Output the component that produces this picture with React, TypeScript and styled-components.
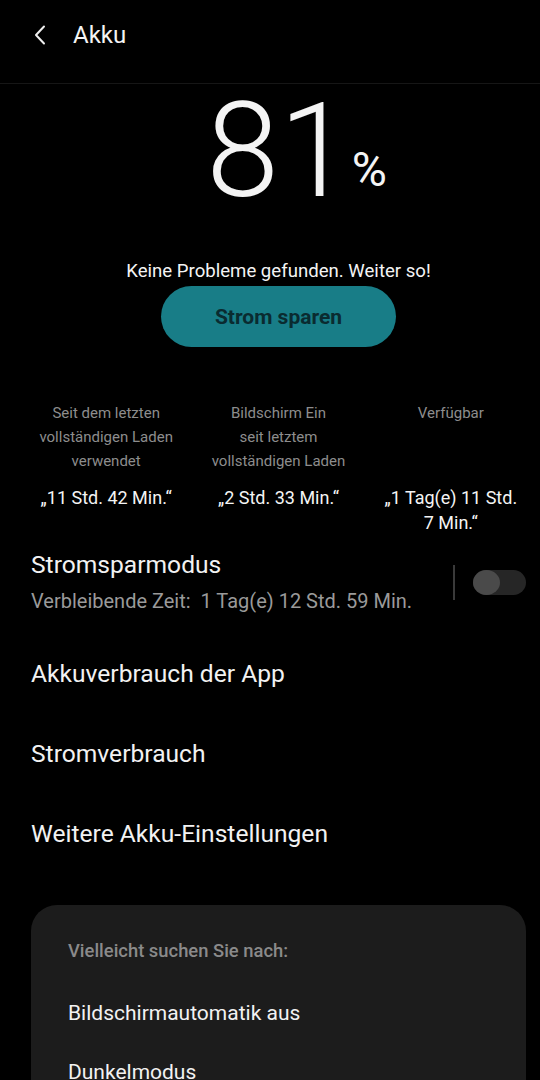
import React from "react"
import styled, { createGlobalStyle } from "styled-components"

const GlobalStyle = createGlobalStyle`
  html, body {
    margin: 0;
    padding: 0;
    background: #000;
  }
  body {
    font-family: Roboto, "Noto Sans", "Liberation Sans", sans-serif;
    color: #f4f4f4;
  }
`

const Page = styled.div`
  width: 540px;
  height: 1080px;
  overflow: hidden;
  background: #000;
`

const Header = styled.header`
  display: flex;
  align-items: center;
  height: 70px;
  padding: 0 0 13px 0;
  border-bottom: 1px solid #161616;
`

const BackButton = styled.button`
  display: flex;
  align-items: center;
  justify-content: center;
  width: 40px;
  height: 40px;
  margin-left: 20px;
  padding: 0;
  background: none;
  border: none;
  color: #eee;
`

const Title = styled.h1`
  margin: 0 0 0 13px;
  font-size: 24px;
  font-weight: 400;
  color: #f4f4f4;
`

const Level = styled.div`
  display: flex;
  justify-content: center;
  margin-top: 2px;
  padding-left: 18px;
`

const LevelNumber = styled.span`
  position: relative;
  font-size: 131px;
  line-height: 131px;
  font-weight: 300;
`

const Percent = styled.span`
  position: absolute;
  left: 100%;
  bottom: 23px;
  margin-left: 0;
  font-size: 48px;
  line-height: 48px;
  font-weight: 400;
`

const Content = styled.main`
  padding: 0 14px 0 31px;
`

const Message = styled.p`
  margin: 42px 0 0;
  text-align: center;
  font-size: 18.6px;
  line-height: 24px;
`

const SaveButton = styled.button`
  display: block;
  width: 235px;
  height: 61px;
  margin: 3px auto 0;
  border: none;
  border-radius: 31px;
  background: #187d87;
  color: #0a2b30;
  font-family: Roboto, sans-serif;
  font-size: 21px;
  font-weight: 700;
`

const Stats = styled.div`
  display: grid;
  grid-template-columns: repeat(3, 1fr);
  margin: 54px -11px 0;
`

const Stat = styled.div`
  display: flex;
  flex-direction: column;
  align-items: center;
  text-align: center;
  padding: 0 6px;
`

const StatLabel = styled.div`
  height: 72px;
  font-size: 15px;
  line-height: 24px;
  color: #8d8d8d;
`

const StatValue = styled.div`
  margin-top: 12px;
  font-size: 18px;
  line-height: 25px;
  color: #f4f4f4;
`

const SwitchRow = styled.div`
  display: flex;
  align-items: center;
  margin-top: 15px;
`

const SwitchText = styled.div`
  flex: 1;
`

const ItemTitle = styled.div`
  font-size: 24.6px;
  line-height: 30px;
  color: #f2f2f2;
`

const ItemSub = styled.div`
  margin-top: 8px;
  font-size: 20px;
  line-height: 26px;
  color: #9a9a9a;
  white-space: pre;
`

const VDivider = styled.div`
  width: 2px;
  height: 35px;
  margin-right: 18px;
  background: #3a3a3a;
`

const Toggle = styled.div`
  display: flex;
  align-items: center;
  width: 53px;
  height: 25px;
  border-radius: 13px;
  background: #262626;
`

const Knob = styled.div`
  width: 27px;
  height: 25px;
  border-radius: 50%;
  background: #4a4a4a;
`

const List = styled.div`
  margin-top: 19px;
`

const ListItem = styled.div`
  display: flex;
  align-items: center;
  height: 80px;
  font-size: 24.6px;
  color: #f2f2f2;
`

const Card = styled.section`
  margin-top: 32px;
  padding: 34px 37px 0;
  border-radius: 26px;
  background: #1c1c1c;
  height: 200px;
`

const CardHeader = styled.div`
  font-size: 18.4px;
  line-height: 24px;
  font-weight: 500;
  color: #8a8a8a;
`

const CardItems = styled.div`
  margin-top: 20px;
`

const CardItem = styled.div`
  display: flex;
  align-items: center;
  height: 59px;
  font-size: 21px;
  color: #f2f2f2;
`

const stats = [
  { label: ["Seit dem letzten", "vollständigen Laden", "verwendet"], value: "„11 Std. 42 Min.“" },
  { label: ["Bildschirm Ein", "seit letztem", "vollständigen Laden"], value: "„2 Std. 33 Min.“" },
  { label: ["Verfügbar"], value: "„1 Tag(e) 11 Std. 7\u00a0Min.“" },
]

const links = ["Akkuverbrauch der App", "Stromverbrauch", "Weitere Akku-Einstellungen"]

export default function App() {
  return (
    <Page>
      <GlobalStyle />
      <Header>
        <BackButton aria-label="Zurück">
          <svg width="14" height="20" viewBox="0 0 14 20" fill="none">
            <polyline points="11,1.5 3,10 11,18.5" stroke="#eee" strokeWidth="2" strokeLinecap="round" strokeLinejoin="round" />
          </svg>
        </BackButton>
        <Title>Akku</Title>
      </Header>

      <Level>
        <LevelNumber>
          81
          <Percent>%</Percent>
        </LevelNumber>
      </Level>

      <Content>
        <Message>Keine Probleme gefunden. Weiter so!</Message>
        <SaveButton>Strom sparen</SaveButton>

        <Stats>
          {stats.map((s, i) => (
            <Stat key={i}>
              <StatLabel>
                {s.label.map((l, j) => (
                  <div key={j}>{l}</div>
                ))}
              </StatLabel>
              <StatValue>{s.value}</StatValue>
            </Stat>
          ))}
        </Stats>

        <SwitchRow>
          <SwitchText>
            <ItemTitle>Stromsparmodus</ItemTitle>
            <ItemSub>{"Verbleibende Zeit:  1 Tag(e) 12 Std. 59 Min."}</ItemSub>
          </SwitchText>
          <VDivider />
          <Toggle>
            <Knob />
          </Toggle>
        </SwitchRow>

        <List>
          {links.map((l) => (
            <ListItem key={l}>{l}</ListItem>
          ))}
        </List>

        <Card>
          <CardHeader>Vielleicht suchen Sie nach:</CardHeader>
          <CardItems>
            <CardItem>Bildschirmautomatik aus</CardItem>
            <CardItem>Dunkelmodus</CardItem>
          </CardItems>
        </Card>
      </Content>
    </Page>
  )
}
